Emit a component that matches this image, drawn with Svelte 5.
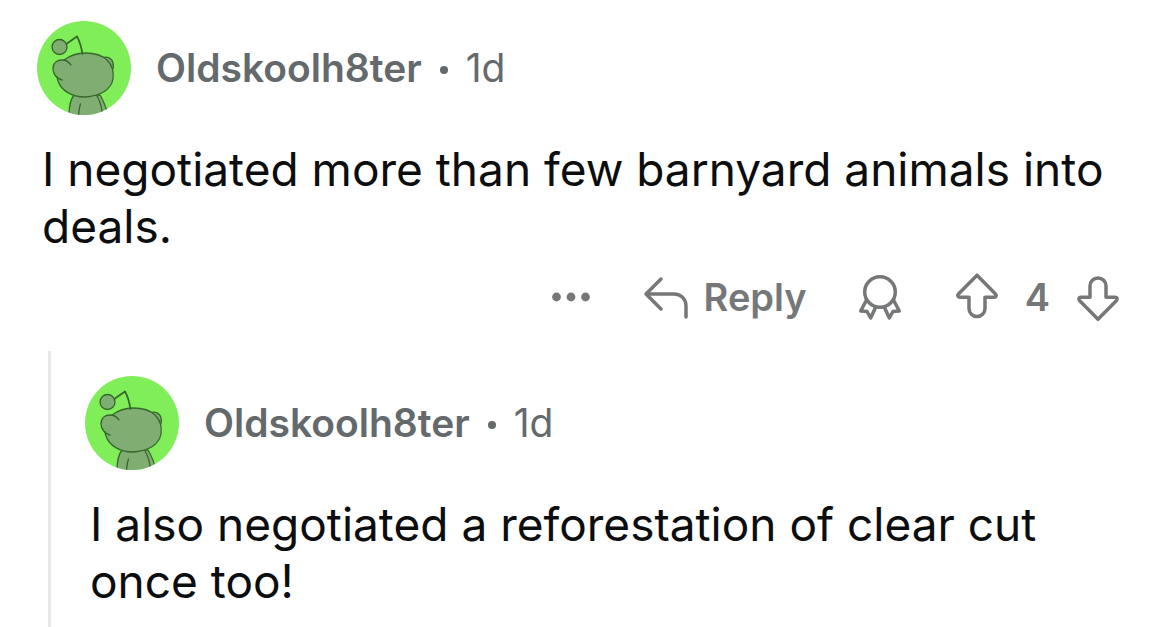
<script>
  const author = 'Oldskoolh8ter';
  let votes = $state(4);
</script>

{#snippet avatar()}
  <svg class="avatar" viewBox="0 0 94 94" aria-hidden="true">
    <defs>
      <clipPath id="disc"><circle cx="47" cy="47" r="47" /></clipPath>
    </defs>
    <circle cx="47" cy="47" r="47" fill="#80ee58" />
    <g clip-path="url(#disc)" fill="#7fad72" stroke="#35672b" stroke-width="1.3" stroke-linecap="round" stroke-linejoin="round">
      <path d="M37 74C33 79 32 85 32 95H71C69 85 66 79 63 74Z" />
      <path d="M43.500 83C42 87 42 90 41.500 95M60 75C63 80 65 86 65.500 95" fill="none" />
      <path d="M65 37C70 35 75 37 76 42C77 45 76 48 75 50Z" />
      <path d="M19 54C15 50 15 43 19 41C21 39 24 39 27 39C34 34 40 32 48 32C56 32 65 34 70 39C75 44 77 51 76 58C74 69 63 75 48 76C34 76 24 69 21 60C20 58 19 56 19 54Z" stroke="none" />
      <path d="M27 39C34 34 40 32 48 32C56 32 65 34 70 39C75 44 77 51 76 58C74 69 63 75 48 76C34 76 24 69 21 60L20 56" fill="none" />
      <path d="M25 59C20 58 16 53 16 48C16 42 20 39 25 39C29 39 32 41 34 44" fill="none" />
      <path d="M30 22.500L40 15.500C42.500 20 44.500 27 45.500 33" fill="none" stroke-width="1.700" />
      <circle cx="22.500" cy="26" r="7.500" />
    </g>
  </svg>
{/snippet}

{#snippet header()}
  <header>
    {@render avatar()}
    <p class="byline">
      <strong>{author}</strong>
      <span class="dot" aria-hidden="true"></span>
      <time>1d</time>
    </p>
  </header>
{/snippet}

{#snippet arrow()}
  <path d="M24 5.200L5.700 23.700C4.200 25.300 4.800 27.300 7 27.300H16V38.500A8 8 0 0 0 32 38.500V27.300H41C43.200 27.300 43.800 25.300 42.300 23.700Z" />
{/snippet}

<main>
  <article>
    {@render header()}
    <p class="text">I negotiated more than few barnyard animals into deals.</p>
    <div class="actions">
      <button aria-label="More options">
        <svg width="40" height="52" viewBox="0 1 40 52" aria-hidden="true">
          <g fill="currentColor" stroke="none">
            <circle cx="5.500" cy="27" r="4.400" />
            <circle cx="20" cy="27" r="4.400" />
            <circle cx="34.500" cy="27" r="4.400" />
          </g>
        </svg>
      </button>
      <button class="reply">
        <svg width="48" height="52" viewBox="0 1 48 52" aria-hidden="true">
          <path d="M19 9L4 24L19 39M4 24H32C39 24 44 29 44 36V47" />
        </svg>
        Reply
      </button>
      <button aria-label="Give award">
        <svg width="44" height="52" viewBox="0 1 44 52" aria-hidden="true">
          <circle cx="22" cy="22" r="15.300" />
          <path d="M8 31L2.700 41L9 41.500L12.700 48L17.500 37.500M36 31L41.300 41L35 41.500L31.300 48L26.500 37.500" />
        </svg>
      </button>
      <div class="votes">
        <button aria-label="Upvote" onclick={() => votes++}>
          <svg width="48" height="52" viewBox="0 1 48 52" aria-hidden="true">{@render arrow()}</svg>
        </button>
        <span>{votes}</span>
        <button aria-label="Downvote" onclick={() => votes--}>
          <svg width="48" height="52" viewBox="0 1 48 52" aria-hidden="true">
            <g transform="matrix(1 0 0 -1 0 54.500)">{@render arrow()}</g>
          </svg>
        </button>
      </div>
    </div>
  </article>

  <article class="nested">
    {@render header()}
    <p class="text">I also negotiated a reforestation of clear cut once too!</p>
  </article>
</main>

<style>
  :global(body) {
    margin: 0;
    background: #fff;
  }

  main {
    padding: 21px 48px 0 37px;
    font-family: Inter, "Liberation Sans", sans-serif;
    color: #0c0d0e;
  }

  p {
    margin: 0;
  }

  header {
    display: flex;
    align-items: center;
    gap: 25px;
  }

  .avatar {
    flex: none;
    width: 94px;
    height: 94px;
  }

  .byline {
    display: flex;
    align-items: center;
    font-size: 39px;
    line-height: 48px;
    color: #64696c;
  }

  strong {
    font-weight: 600;
  }

  .dot {
    width: 8px;
    height: 8px;
    margin: 4px 18px 0;
    border-radius: 50%;
    background: currentColor;
  }

  .text {
    padding: 26px 0 0 5px;
    font-size: 46px;
    line-height: 57px;
  }

  .actions {
    display: flex;
    justify-content: flex-end;
    align-items: center;
    gap: 51px;
    padding: 16px 0 28px;
    font-size: 38px;
    font-weight: 600;
    line-height: 52px;
    color: #757779;
  }

  button {
    display: flex;
    align-items: center;
    padding: 0;
    border: 0;
    background: none;
    color: inherit;
    font: inherit;
    cursor: pointer;
  }

  .reply {
    gap: 14px;
  }

  .votes {
    display: flex;
    align-items: center;
    gap: 24px;
  }

  .actions svg {
    display: block;
    fill: none;
    stroke: currentColor;
    stroke-width: 3.5px;
    stroke-linecap: round;
    stroke-linejoin: round;
  }

  .nested {
    margin-left: 11px;
    padding: 25px 0 40px 34px;
    border-left: 3px solid #e6e8ea;
  }
</style>
